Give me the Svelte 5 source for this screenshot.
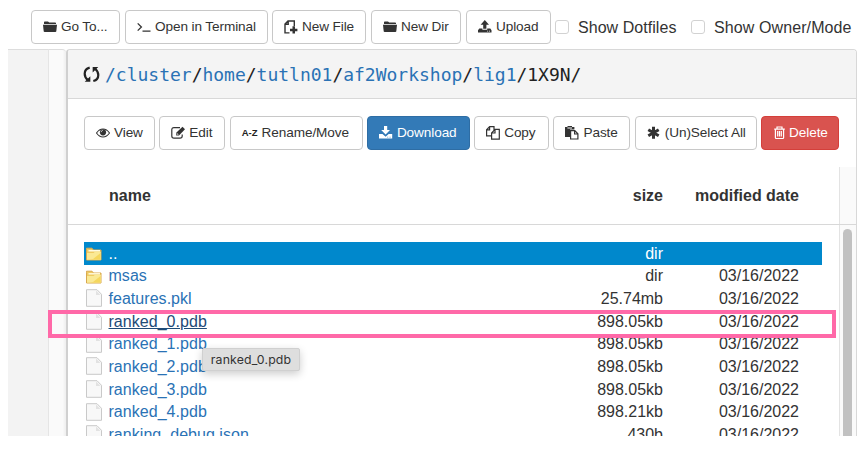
<script>
  const topButtons = [
    { icon: 'folder', label: 'Go To...', w: 89 },
    { icon: 'terminal', label: 'Open in Terminal', w: 143 },
    { icon: 'newfile', label: 'New File', w: 94 },
    { icon: 'folder', label: 'New Dir', w: 90 },
    { icon: 'upload', label: 'Upload', w: 85 }
  ];
  const actions = [
    { icon: 'eye', label: 'View', w: 71 },
    { icon: 'edit', label: 'Edit', w: 66 },
    { icon: 'az', label: 'Rename/Move', w: 133 },
    { icon: 'download', label: 'Download', w: 103, kind: 'primary' },
    { icon: 'copy', label: 'Copy', w: 75 },
    { icon: 'paste', label: 'Paste', w: 77 },
    { icon: 'asterisk', label: '(Un)Select All', w: 122 },
    { icon: 'trash', label: 'Delete', w: 78, kind: 'danger' }
  ];
  const crumbs = ['/cluster', 'home', 'tutln01', 'af2Workshop', 'lig1'];
  const date = '03/16/2022';
  const rows = [
    { name: '..', size: 'dir', date: '', dir: true, selected: true },
    { name: 'msas', size: 'dir', date, dir: true },
    { name: 'features.pkl', size: '25.74mb', date },
    { name: 'ranked_0.pdb', size: '898.05kb', date, hover: true },
    { name: 'ranked_1.pdb', size: '898.05kb', date },
    { name: 'ranked_2.pdb', size: '898.05kb', date },
    { name: 'ranked_3.pdb', size: '898.05kb', date },
    { name: 'ranked_4.pdb', size: '898.21kb', date },
    { name: 'ranking_debug.json', size: '430b', date }
  ];
</script>

{#snippet icon(name)}
  {#if name === 'az'}
    <span class="az">A-Z</span>
  {:else}
    <svg class="icon" viewBox="0 0 14 14" fill="currentColor">
      {#if name === 'folder'}
        <path d="M1 4V2.2Q1 1.4 1.8 1.4H5L6.2 2.5H12.2Q13 2.5 13 3.3V4Z" /><path d="M0 4.8H14L13.3 11.2Q13.2 12 12.4 12H1.6Q.8 12 .7 11.2Z" />
      {:else if name === 'terminal'}
        <path d="M.7 3.4 4.4 7 .7 10.6M5.5 11.1H13.5" fill="none" stroke="currentColor" stroke-width="1.3" />
      {:else if name === 'newfile'}
        <path d="M5.5 12.9H1V4L4 1H10.3V6M4.2 1.3V4.3H1.3" fill="none" stroke="currentColor" stroke-width="1.4" /><path d="M8.5 6.3H11V8.7H13.4V11.2H11V13.6H8.5V11.2H6V8.7H8.5Z" />
      {:else if name === 'upload'}
        <path d="M6.8 0 11 4.8H8.4V8.8H5.2V4.8H2.6Z" /><path fill-rule="evenodd" d="M1.3 8.5H4.4V9.8H9.2V8.5H12.3L13.5 10.2V12.5H0V10.2ZM9.1 10.7V11.6H10.1V10.7ZM11 10.7V11.6H12V10.7Z" />
      {:else if name === 'eye'}
        <path d="M.5 7Q3.2 3 7 3T13.5 7Q10.8 11 7 11T.5 7Z" fill="none" stroke="currentColor" stroke-width="1.1" /><circle cx="7" cy="6.3" r="3.1" /><path d="M5.1 6.2Q5.2 4.6 6.8 4.4" fill="none" stroke="#fff" stroke-width=".7" />
      {:else if name === 'edit'}
        <path d="M9 1.6H3Q.8 1.6 .8 3.8V10Q.8 12.2 3 12.2H9Q11.2 12.2 11.2 10V8.6" fill="none" stroke="currentColor" stroke-width="1.2" /><path d="M11.5 .8 14 3.3 8 9.4H5.2V6.7Z" /><path d="M6.2 7.1V8.4H7.5" fill="none" stroke="#fff" stroke-width=".6" />
      {:else if name === 'download'}
        <path d="M5 0H8.2V4H11L6.6 8.6 2.2 4H5Z" /><path fill-rule="evenodd" d="M0 8H3.5L6.6 10.7 9.7 8H13.2V12.5H0ZM8.3 10.7V11.5H9.2V10.7ZM10.6 10.7V11.5H11.5V10.7Z" />
      {:else if name === 'copy'}
        <path d="M5 9.8H.6V3.8L3.6.7H8V4.4M3.6.7V3.8H.6M13.3 3.4V13.2H5.6V7L9 3.4ZM9 3.6V7H5.8" fill="none" stroke="currentColor" stroke-width="1.2" />
      {:else if name === 'paste'}
        <path fill-rule="evenodd" d="M0 1H2.5V0H7V1H9.4V3.5H5V11H0ZM2.4 1.6V2.4H7V1.6Z" /><path d="M5.6 4.6H9.8L12.9 7.8V13H5.6ZM9.6 4.8V8H12.8" fill="none" stroke="currentColor" stroke-width="1.2" />
      {:else if name === 'asterisk'}
        <path d="M6.5 .8V12.8M1.3 3.8 11.7 9.8M1.3 9.8 11.7 3.8" fill="none" stroke="currentColor" stroke-width="3" />
      {:else if name === 'trash'}
        <path d="M1.2 3.2H11.8M4 3V1H9V3M2.4 3.5V11.7Q2.4 12.5 3.2 12.5H9.8Q10.6 12.5 10.6 11.7V3.5M4.7 5V10.6M6.5 5V10.6M8.3 5V10.6" fill="none" stroke="currentColor" stroke-width="1.2" />
      {/if}
    </svg>
  {/if}
{/snippet}

<div class="page">
  <header class="toolbar">
    {#each topButtons as b}
      <button class="btn" style:width="{b.w}px">{@render icon(b.icon)}<span>{b.label}</span></button>
    {/each}
    <label class="dot"><i></i><span>Show Dotfiles</span></label>
    <label class="owner"><i></i><span>Show Owner/Mode</span></label>
  </header>

  <div class="body">
    <aside></aside>
    <div class="gutter"></div>
    <main>
      <div class="path">
        <svg class="refresh" viewBox="0 0 16 16" fill="none" stroke="#222" stroke-width="2.1">
          <path d="M6.3 1.6Q1.6 2.8 1.6 7.3Q1.6 10.6 4.4 13M9.7 14.1Q14.4 12.9 14.4 8.4Q14.4 5.2 11.6 2.8" />
          <path d="M1.6 14.9H6.9V9.6ZM14.4 .9H9.1V6.2Z" fill="#222" stroke="none" />
        </svg>
        <div class="crumbs">{#each crumbs as c}<a>{c}</a>/{/each}1X9N/</div>
      </div>
      <div class="actions">
        {#each actions as b}
          <button class="btn {b.kind ?? ''}" style:width="{b.w}px">{@render icon(b.icon)}<span>{b.label}</span></button>
        {/each}
      </div>
      <div class="thead">
        <div class="cols"><b class="name">name</b><b class="size">size</b><b class="date">modified date</b></div>
        <div class="track"></div>
      </div>
      <div class="table">
        <div class="rows">
          {#each rows as r}
            <div class="row" class:selected={r.selected} class:hover={r.hover}>
              {#if r.dir}
                <svg class="ficon" viewBox="0 0 18 18">
                  <path d="M1.5 4.2V3.2H7L8.5 5H16V15H1.5Z" fill="#efcb62" stroke="#d8a850" />
                  <path d="M3.5 5.8H15" stroke="#fffbe3" stroke-width="1.4" />
                  <path d="M2 8H8.5L10 6.8H15.8V14.7H2Z" fill="#fae994" /><path d="M8 14 15.5 8V14.5H5Z" fill="#f3ce3f" opacity=".65" />
                </svg>
              {:else}
                <svg class="ficon doc" viewBox="0 0 18 18">
                  <path d="M1.5 .7H12L16.5 5.3V17.3H1.5Z" fill="#f8f8f8" stroke="#c9c9c9" stroke-linejoin="round" />
                  <path d="M11 1.5 15.5 6H11Z" fill="#e2e2e2" />
                </svg>
              {/if}
              <a class="name">{r.name}</a><span class="size">{r.size}</span><span class="date">{r.date}</span>
            </div>
          {/each}
        </div>
        <div class="track"><div class="thumb"></div></div>
      </div>
    </main>
  </div>
  <div class="highlight"></div>
  <div class="tip">ranked_0.pdb</div>
</div>

<style>
  .page { position: relative; width: 862px; height: 450px; overflow: hidden; background: #fff; color: #333; font: 16px/22.7px "Liberation Sans", Arial, sans-serif; box-sizing: border-box; }
  .page * { box-sizing: border-box; }
  .toolbar { display: flex; height: 49px; padding: 10px 0 0 31px; gap: 5px; align-items: flex-start; white-space: nowrap; }
  .toolbar .btn:nth-child(2) { margin-right: -1px; }
  .btn { display: flex; flex: none; align-items: center; justify-content: flex-start; gap: 4px; height: 34px; padding: 0 0 0 11px; border: 1px solid #c8c8c8; border-radius: 4px; background: #fff; color: #333; font: 13.6px/20px "Liberation Sans", Arial, sans-serif; letter-spacing: -.1px; white-space: nowrap; }
  .icon { width: 14px; height: 14px; flex: none; }
  .az { width: 16px; font-size: 9.5px; font-weight: bold; color: #222; }
  .primary { background: #337ab7; border-color: #2e6da4; color: #fff; }
  .danger { background: #d9534f; border-color: #d43f3a; color: #fff; }
  .danger .icon { margin-right: -2px; }
  label { display: flex; align-items: center; height: 34px; letter-spacing: .1px; }
  label span { padding-top: 2px; }
  label i { width: 14px; height: 14px; border: 1px solid #d2d2d2; border-radius: 3px; margin-right: 9px; background: #fff; }
  .dot { width: 131px; margin-left: -1px; letter-spacing: .05px; }
  .body { display: flex; height: 387px; margin-left: 8px; }
  aside { width: 41px; background: #f3f3f3; border-top: 1px solid #ddd; border-right: 1px solid #e5e5e5; }
  .gutter { width: 17px; background: linear-gradient(90deg, #fafafa 80%, #eee); border-top: 1px solid #ddd; border-radius: 0 4px 0 0; }
  main { width: 791px; height: 387px; overflow: hidden; border: 1px solid #d8d8d8; border-left: 2px solid #d0d0d0; border-bottom: 0; border-radius: 4px 4px 0 0; }
  .path { display: flex; align-items: center; height: 49px; padding-left: 15px; background: #f4f4f4; border-bottom: 1px solid #d8d8d8; }
  .refresh { width: 17px; height: 17px; margin-right: 5px; }
  .crumbs { padding-top: 2px; font: 18px/24px "DejaVu Sans Mono", monospace; letter-spacing: -.01px; color: #222; white-space: nowrap; }
  a { color: #2a72b5; text-decoration: none; }
  .actions { display: flex; height: 68px; padding: 17px 0 0 16px; gap: 4.3px; }
  .thead { display: flex; height: 58px; border-bottom: 1px solid #d8d8d8; }
  .cols { display: flex; width: 771px; padding: 18px 40px 0 41px; }
  b { letter-spacing: 0; }
  .name { flex: 1; }
  .size { width: 100px; text-align: right; }
  .date { width: 136px; text-align: right; }
  .track { width: 17px; background: #fafafa; border-left: 1px solid #e3e3e3; }
  .table { display: flex; height: 212px; }
  .rows { width: 771px; padding: 17px 17px 0 16px; overflow: hidden; }
  .row { display: flex; height: 22.7px; padding: 1px 23px 0 1px; align-items: center; }
  .row .name { letter-spacing: .04px; }
  .selected, .selected a { background: #0088cc; color: #fff; }
  .hover a { color: #1e4b77; }
  .hover .name { text-decoration: underline; }
  .ficon { width: 18px; height: 18px; margin-right: 5.5px; flex: none; }
  .doc { margin-top: -2px; }
  .thumb { width: 9px; height: 230px; margin: 4px 0 0 3px; border-radius: 5px; background: #c1c1c1; }
  .highlight { position: absolute; left: 48px; top: 310px; width: 788px; height: 28px; border: 4px solid #ff69a8; }
  .tip { position: absolute; left: 202px; top: 348px; width: 98px; height: 23px; background: #dedede; border: 1px solid #d0d0d0; border-radius: 2px; box-shadow: 0 3px 8px #0003; font: 12.3px/21px Inter, sans-serif; color: #333; text-align: center; letter-spacing: .15px; }
</style>
